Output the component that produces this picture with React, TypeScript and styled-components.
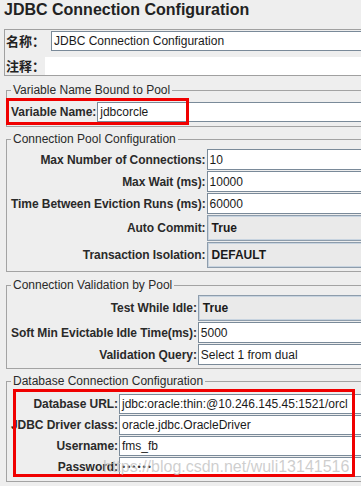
import styled, { createGlobalStyle } from 'styled-components';

const GlobalStyle = createGlobalStyle`
  html, body {
    margin: 0;
    padding: 0;
    background: #eeeeee;
    overflow: hidden;
  }
  body {
    font-family: "Liberation Sans", Arial, "Noto Sans CJK SC", sans-serif;
    color: #222;
  }
`;

type Row = { label: string; value: string; combo?: boolean; h?: number };

const poolRows: Row[] = [
  { label: 'Max Number of Connections:', value: '10' },
  { label: 'Max Wait (ms):', value: '10000' },
  { label: 'Time Between Eviction Runs (ms):', value: '60000' },
  { label: 'Auto Commit:', value: 'True', combo: true },
  { label: 'Transaction Isolation:', value: 'DEFAULT', combo: true },
];

const validationRows: Row[] = [
  { label: 'Test While Idle:', value: 'True', combo: true },
  { label: 'Soft Min Evictable Idle Time(ms):', value: '5000' },
  { label: 'Validation Query:', value: 'Select 1 from dual' },
];

const dbRows: Row[] = [
  { label: 'Database URL:', value: 'jdbc:oracle:thin:@10.246.145.45:1521/orcl', h: 20 },
  { label: 'JDBC Driver class:', value: 'oracle.jdbc.OracleDriver', h: 20 },
  { label: 'Username:', value: 'fms_fb', h: 20 },
];

const FormRows = ({ rows }: { rows: Row[] }) => (
  <>
    {rows.map(r => (
      <FormRow key={r.label}>
        <Label>{r.label}</Label>
        <Field $combo={r.combo} $h={r.h ?? (r.combo ? 26 : 21)}>
          {r.value}
        </Field>
      </FormRow>
    ))}
  </>
);

const App = () => {
  return (
    <Page>
      <GlobalStyle />
      <Title>JDBC Connection Configuration</Title>

      <NamePanel>
        <NameRow>
          <CjkLabel>名称：</CjkLabel>
          <Field $h={20} $inset={6}>JDBC Connection Configuration</Field>
        </NameRow>
        <CommentRow>
          <CjkLabel>注释：</CjkLabel>
          <CommentField />
        </CommentRow>
      </NamePanel>

      <Group>
        <Legend>Variable Name Bound to Pool</Legend>
        <VarRow>
          <Label>Variable Name:</Label>
          <Field $h={20}>jdbcorcle</Field>
          <Highlight $top={-3} $left={-5} $width={183} $height={27} />
        </VarRow>
      </Group>

      <Group>
        <Legend>Connection Pool Configuration</Legend>
        <Grid>
          <FormRows rows={poolRows} />
        </Grid>
      </Group>

      <Group $gapTop={6}>
        <Legend>Connection Validation by Pool</Legend>
        <Grid>
          <FormRows rows={validationRows} />
        </Grid>
      </Group>

      <Group $padTop={6} $padBottom={4}>
        <Legend>Database Connection Configuration</Legend>
        <Grid>
          <FormRows rows={dbRows} />
          <FormRow>
            <Label>Password:</Label>
            <Field $h={20}>
              <Dots>••••••</Dots>
            </Field>
          </FormRow>
          <Highlight $top={-5} $left={2} $width={342} $height={88} />
          <Watermark>https://blog.csdn.net/wuli13141516</Watermark>
        </Grid>
      </Group>
    </Page>
  );
};

const Page = styled.div`
  width: 430px;
`;

const Title = styled.h1`
  margin: 0 0 9px;
  padding-left: 4px;
  font-size: 16px;
  line-height: 20px;
  font-weight: bold;
  color: #222;
`;

const NamePanel = styled.div`
  margin-left: 4px;
  padding: 1px 0 0 0;
  border: 1px solid #a0a0a0;
  border-right: none;
`;

const NameRow = styled.div`
  display: flex;
  align-items: center;
  height: 20px;
`;

const CommentRow = styled.div`
  display: flex;
  align-items: center;
  height: 18px;
  margin-top: 6px;
`;

const CjkLabel = styled.span`
  flex: none;
  width: 39px;
  padding-left: 1px;
  font-family: "Noto Sans CJK SC", sans-serif;
  font-size: 13px;
  font-weight: bold;
  line-height: 16px;
  color: #222;
`;

const CommentField = styled.div`
  flex: 1;
  align-self: stretch;
  background: #fff;
`;

const Group = styled.fieldset<{ $gapTop?: number; $padTop?: number; $padBottom?: number }>`
  position: relative;
  min-width: 0;
  margin: ${p => p.$gapTop ?? 5}px 0 0 6px;
  padding: ${p => p.$padTop ?? 3}px 0 ${p => p.$padBottom ?? 3}px 4px;
  border: 1px solid #a3a3a3;
  border-right: none;
  &:first-of-type {
    margin-top: 7px;
  }
`;

const Legend = styled.legend`
  padding: 0 2px;
  font-size: 12px;
  line-height: 14px;
  color: #2a2a2a;
`;

const VarRow = styled.div`
  position: relative;
  display: flex;
  align-items: center;
  gap: 1px;
  height: 22px;
  margin-top: 1px;
`;

const Grid = styled.div`
  position: relative;
  display: grid;
  grid-template-columns: auto 1fr;
  row-gap: 1px;
  column-gap: 1px;
`;

const FormRow = styled.div`
  display: contents;
`;

const Label = styled.span`
  display: flex;
  align-items: center;
  justify-content: flex-end;
  font-size: 12px;
  font-weight: bold;
  letter-spacing: -0.06px;
  color: #2a2a2a;
  white-space: nowrap;
`;

const Field = styled.div<{ $combo?: boolean; $h: number; $inset?: number }>`
  flex: 1;
  box-sizing: border-box;
  height: ${p => p.$h}px;
  margin-left: ${p => p.$inset ?? 0}px;
  display: flex;
  align-items: center;
  padding-left: ${p => (p.$combo ? 4 : 2)}px;
  font-size: 12px;
  font-weight: ${p => (p.$combo ? 'bold' : 'normal')};
  color: #1a1a1a;
  white-space: nowrap;
  overflow: hidden;
  background: ${p => (p.$combo ? '#eaeaea' : '#ffffff')};
  border: 1px solid ${p => (p.$combo ? '#8e9dac' : '#7a8a99')};
  box-shadow: ${p => (p.$combo ? 'inset 0 0 0 1px #c8d4e0' : 'none')};
`;

const Dots = styled.span`
  font-size: 9px;
  letter-spacing: 2px;
  color: #333;
`;

const Highlight = styled.div<{ $top: number; $left: number; $width: number; $height: number }>`
  position: absolute;
  top: ${p => p.$top}px;
  left: ${p => p.$left}px;
  width: ${p => p.$width}px;
  height: ${p => p.$height}px;
  box-sizing: border-box;
  border: 3px solid #f00000;
  pointer-events: none;
`;

const Watermark = styled.div`
  position: absolute;
  left: 92px;
  top: 65px;
  font-size: 16px;
  line-height: 16px;
  color: rgba(190, 190, 190, 0.75);
  white-space: nowrap;
  pointer-events: none;
`;

export default App;
